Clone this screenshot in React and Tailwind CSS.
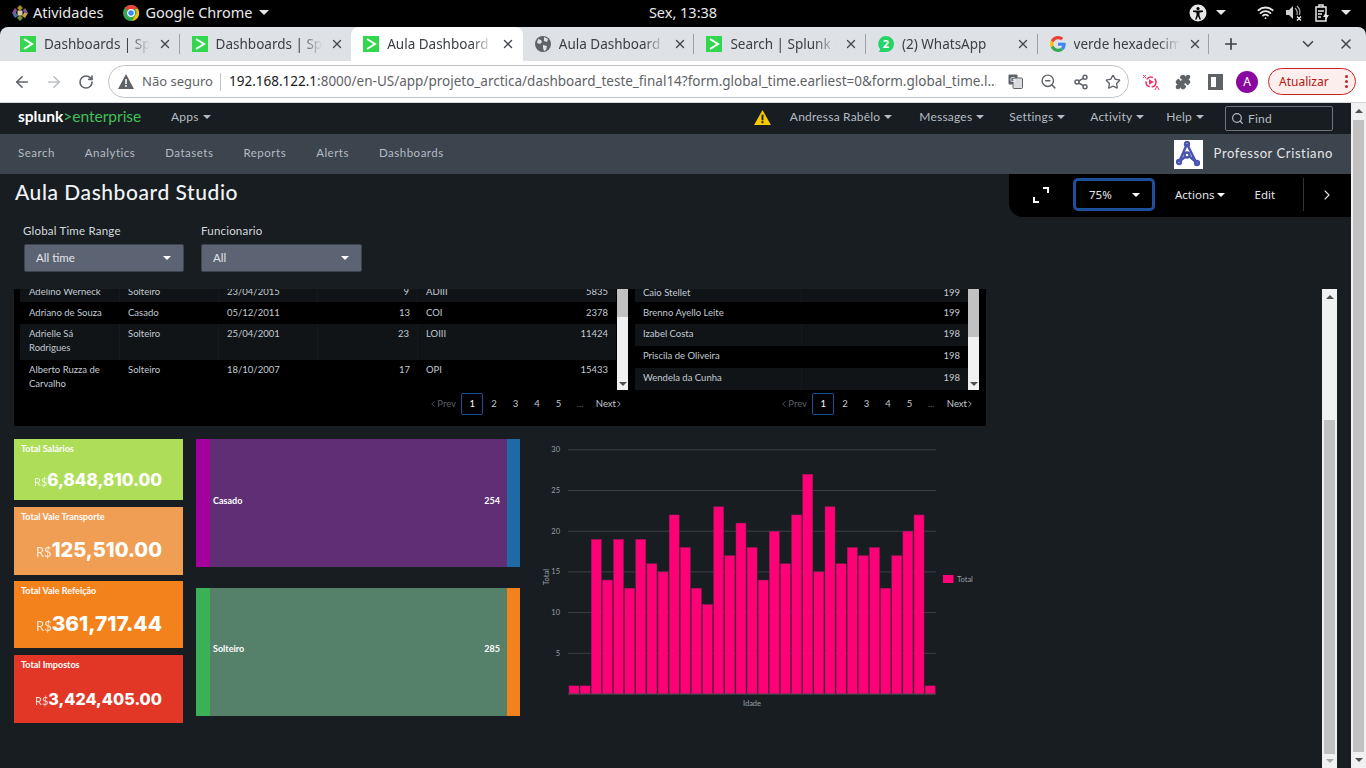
import React from "react";
import {
  ArrowLeft,
  ArrowRight,
  RotateCw,
  X,
  Plus,
  ChevronDown,
  ChevronLeft,
  ChevronRight,
  Search,
  ZoomOut,
  Share2,
  Star,
  Puzzle,
  Wifi,
} from "lucide-react";

const chromeFont = "font-['Noto_Sans',sans-serif]";
const splunkFont = "font-['Lato',sans-serif]";
const valueFont = "font-['Inter',sans-serif]";

const tabs = [
  { title: "Dashboards | Splunk", icon: "splunk", sep: true },
  { title: "Dashboards | Splunk", icon: "splunk" },
  { title: "Aula Dashboard Studio", icon: "splunk", active: true },
  { title: "Aula Dashboard Studio", icon: "globe", sep: true },
  { title: "Search | Splunk 8.2", icon: "splunk", sep: true },
  { title: "(2) WhatsApp", icon: "whatsapp", sep: true },
  { title: "verde hexadecimal", icon: "google", sep: true },
];

const employees = [
  { cells: ["Adelino Werneck", "Solteiro", "23/04/2015", "9", "ADIII", "5835"], odd: true, pad: "pt-[5px] pb-[3px]" },
  { cells: ["Adriano de Souza", "Casado", "05/12/2011", "13", "COI", "2378"], pad: "pt-[4px] pb-[4px]" },
  { cells: ["Adrielle Sá Rodrigues", "Solteiro", "25/04/2001", "23", "LOIII", "11424"], odd: true, pad: "pt-[3px] pb-[5px]" },
  { cells: ["Alberto Ruzza de Carvalho", "Solteiro", "18/10/2007", "17", "OPI", "15433"], pad: "pt-[3px] pb-[5px]" },
];

const ranking = [
  { name: "Caio Stellet", total: "199", pad: "pt-[4px]" },
  { name: "Brenno Ayello Leite", total: "199", pad: "" },
  { name: "Izabel Costa", total: "198", pad: "pb-[2px]" },
  { name: "Priscila de Oliveira", total: "198", pad: "pb-[2px]" },
  { name: "Wendela da Cunha", total: "198", pad: "pb-[2px]" },
];

const kpis = [
  { title: "Total Salários", value: "6,848,810.00", bg: "bg-[#aede58]", h: "h-[61px]", size: "text-[17px]", unit: "text-[11px]", pt: "pt-[6px]" },
  { title: "Total Vale Transporte", value: "125,510.00", bg: "bg-[#ef9e54]", h: "h-[68px]", size: "text-[20px]", unit: "text-[13px]", pt: "pt-[8px]" },
  { title: "Total Vale Refeição", value: "361,717.44", bg: "bg-[#f4821c]", h: "h-[67px]", size: "text-[20.800px]", unit: "text-[13px]", pt: "pt-[8px]" },
  { title: "Total Impostos", value: "3,424,405.00", bg: "bg-[#e23726]", h: "h-[68px]", size: "text-[16.200px]", unit: "text-[11px]", pt: "pt-[9px]" },
];

const ages = [1, 1, 19, 14, 19, 13, 19, 16, 15, 22, 18, 13, 11, 23, 17, 21, 18, 14, 20, 16, 22, 27, 15, 23, 16, 18, 17, 18, 13, 17, 20, 22, 1];

const SplunkIcon = () => (
  <span className="w-4 h-4 bg-[#32d74f] text-white flex items-center justify-center shrink-0">
    <svg width="12" height="12" viewBox="0 0 12 12" fill="none" stroke="white" strokeWidth="2">
      <path d="M2 1l8 5-8 5" />
    </svg>
  </span>
);

const GlobeIcon = () => (
  <svg width="16" height="16" viewBox="0 0 16 16" className="shrink-0">
    <circle cx="8" cy="8" r="8" fill="#5f6368" />
    <path d="M3 3l3 1 1 2-2 2-3-1zM9 1l4 2-1 3-3-1zM8 9l4 1-1 4-2 1-1-3z" fill="#dee1e6" />
  </svg>
);

const WhatsAppIcon = () => (
  <svg width="16" height="16" viewBox="0 0 16 16" className="shrink-0">
    <path d="M8 0a8 8 0 0 1 0 16H1l1.2-2.8A8 8 0 0 1 8 0z" fill="#25d366" />
    <text x="8" y="12" textAnchor="middle" fontSize="11" fontWeight="700" fill="white" fontFamily="Noto Sans, sans-serif">2</text>
  </svg>
);

const GoogleIcon = () => (
  <svg width="16" height="16" viewBox="0 0 48 48" className="shrink-0">
    <path fill="#EA4335" d="M24 9.5c3.5 0 6.700 1.200 9.200 3.600l6.900-6.900C35.900 2.400 30.400 0 24 0 14.600 0 6.500 5.400 2.600 13.200l8 6.200C12.400 13.700 17.700 9.500 24 9.500z" />
    <path fill="#4285F4" d="M47 24.500c0-1.600-.1-3.100-.4-4.500H24v9h12.900c-.6 3-2.200 5.500-4.700 7.200l7.700 6c4.500-4.200 7.100-10.300 7.100-17.700z" />
    <path fill="#FBBC05" d="M10.600 28.600c-.5-1.400-.8-3-.8-4.600s.3-3.200.8-4.600l-8-6.200C.9 16.500 0 20.100 0 24s.9 7.500 2.600 10.800l8-6.200z" />
    <path fill="#34A853" d="M24 48c6.500 0 11.900-2.100 15.900-5.800l-7.700-6c-2.200 1.400-4.900 2.300-8.200 2.300-6.300 0-11.600-4.200-13.400-9.900l-8 6.200C6.500 42.600 14.600 48 24 48z" />
  </svg>
);

const tabIcons = { splunk: SplunkIcon, globe: GlobeIcon, whatsapp: WhatsAppIcon, google: GoogleIcon };

const Caret = ({ className = "" }) => (
  <span className={`inline-block w-0 h-0 border-x-[4px] border-x-transparent border-t-[4px] border-t-current shrink-0 ${className}`} />
);

const BigCaret = ({ className = "" }) => (
  <span className={`inline-block w-0 h-0 border-x-[5px] border-x-transparent border-t-[5px] border-t-current shrink-0 ${className}`} />
);

const GnomeBar = () => (
  <div className={`h-[27px] bg-black text-[#e8e8e8] text-[14.5px] flex items-center relative pb-[2px] ${chromeFont}`}>
    <svg width="16" height="16" viewBox="0 0 16 16" className="ml-[12px]">
      <path d="M8 0l3 3-3 3-3-3z" fill="#a9862f" />
      <path d="M13 3l3 5-4 0-1-3z" fill="#7d5a9e" />
      <path d="M16 8l-3 5-3-2 2-3z" fill="#c8a54a" />
      <path d="M8 16l-3-3 3-3 3 3z" fill="#6f8f3a" />
      <path d="M3 3l2 2-1 3H0z" fill="#8e4f93" />
      <path d="M0 8h4l2 3-3 2z" fill="#4a6fa5" />
      <rect x="5.500" y="5.500" width="5" height="5" fill="#d9c9a0" />
    </svg>
    <span className="ml-[5px]">Atividades</span>
    <svg width="16" height="16" viewBox="0 0 16 16" className="ml-[20px]">
      <circle cx="8" cy="8" r="8" fill="#34a853" />
      <path d="M8 0a8 8 0 0 1 7 4H8a4 4 0 0 0-3.500 2L2.200 2.500A8 8 0 0 1 8 0z" fill="#ea4335" />
      <path d="M15 4a8 8 0 0 1-6 12l3.500-6a4 4 0 0 0-.5-6z" fill="#fbbc05" />
      <circle cx="8" cy="8" r="3.400" fill="#4285f4" stroke="white" strokeWidth="1.200" />
    </svg>
    <span className="ml-[6px]">Google Chrome</span>
    <BigCaret className="ml-[6px]" />
    <span className="absolute left-0 right-0 text-center">Sex, 13:38</span>
    <div className="ml-auto flex items-center pr-[15px] relative">
      <svg width="18" height="18" viewBox="0 0 18 18">
        <circle cx="9" cy="9" r="8.500" fill="#e8e8e8" />
        <circle cx="9" cy="4.500" r="1.600" fill="black" />
        <path d="M4 6.500h10v1.400l-3.500.6v3l1.500 4h-1.500L9 12l-1.500 3.500H6l1.500-4v-3L4 7.900z" fill="black" />
      </svg>
      <BigCaret className="ml-[9px]" />
      <Wifi size={17} strokeWidth={2.6} className="ml-[31px]" />
      <svg width="18" height="18" viewBox="0 0 18 18" className="ml-[11px]" fill="#e8e8e8">
        <path d="M1 6h3l4-4v13L4 11H1z" opacity="0.9" />
        <path d="M10 4a7 7 0 0 1 2 7M12 2a9 9 0 0 1 2.500 9" fill="none" stroke="#a0a0a0" strokeWidth="1.300" />
        <path d="M12 12.500l4 4M16 12.500l-4 4" stroke="#e8e8e8" strokeWidth="1.400" />
      </svg>
      <svg width="16" height="20" viewBox="0 0 16 20" className="ml-[11px]" fill="none" stroke="#e8e8e8" strokeWidth="1.500">
        <path d="M2 4h10v14H2zM5 2h4v2H5z" />
        <path d="M4 8h6M4 11h4M4 14h3" />
        <path d="M12 9l-3 5h3l-1 4 4-6h-3z" fill="#e8e8e8" stroke="none" />
      </svg>
      <BigCaret className="ml-[11px]" />
    </div>
  </div>
);

const Tab = ({ tab }) => {
  const Icon = tabIcons[tab.icon];
  return (
    <div className={`w-[171.600px] h-[34px] flex items-center shrink-0 ${tab.active ? "bg-white rounded-t-lg" : ""}`}>
      <span className="ml-[12px]">
        <Icon />
      </span>
      <span className="ml-[8px] w-[106px] leading-[20px] overflow-hidden whitespace-nowrap text-[13.500px] text-[#3c4043] [mask-image:linear-gradient(to_right,black_80%,transparent_100%)]">
        {tab.title}
      </span>
      <X size={14} strokeWidth={2.4} className="ml-[8px] text-[#45484c]" />
      <span className={`ml-auto h-[20px] w-px ${tab.sep ? "bg-[#9ea1a6]" : ""}`} />
    </div>
  );
};

const TabStrip = () => (
  <div className="h-[34px] bg-[#dee1e6] flex items-center pl-[8px] rounded-t-lg">
    {tabs.map((tab, i) => (
      <Tab key={i} tab={tab} />
    ))}
    <Plus size={18} strokeWidth={2.2} className="ml-[13px] text-[#3c4043]" />
    <ChevronDown size={18} strokeWidth={2.2} className="ml-[59px] text-[#45484c]" />
    <X size={16} strokeWidth={2.4} className="ml-[21px] text-[#45484c]" />
  </div>
);

const Toolbar = () => (
  <div className={`h-[42px] bg-white flex items-center border-b border-[#d5d7da] ${chromeFont}`}>
    <ArrowLeft size={18} strokeWidth={2.2} className="ml-[13px] text-[#5f6368]" />
    <ArrowRight size={18} strokeWidth={2.2} className="ml-[14px] text-[#bdc1c6]" />
    <RotateCw size={16} strokeWidth={2.4} className="ml-[15px] text-[#5f6368]" />
    <div className="ml-[14px] w-[1021px] h-[33px] rounded-full border border-[#bfc2c6] flex items-center whitespace-nowrap">
      <svg width="16" height="15" viewBox="0 0 16 15" className="ml-[9px] shrink-0">
        <path d="M8 0l8 15H0z" fill="#5f6368" />
        <rect x="7.200" y="5" width="1.600" height="5" fill="white" />
        <rect x="7.200" y="11" width="1.600" height="1.800" fill="white" />
      </svg>
      <span className="ml-[8px] text-[#5f6368] text-[13px]">Não seguro</span>
      <span className="ml-[7px] w-px h-[18px] bg-[#bfc2c6]" />
      <span className="ml-[8px] text-[#202124] w-[767px] overflow-hidden text-[13.500px]">
        192.168.122.1
        <span className="text-[#5f6368]">:8000/en-US/app/projeto_arctica/dashboard_teste_final14?form.global_time.earliest=0&form.global_time.l...</span>
      </span>
      <svg width="15" height="15" viewBox="0 0 15 15" className="ml-[12px] shrink-0">
        <rect x="0.500" y="0.500" width="9" height="10" rx="1" fill="#5f6368" />
        <rect x="5" y="4" width="9.500" height="10.500" rx="1" fill="#dadce0" stroke="#5f6368" />
        <text x="2" y="8" fontSize="7" fill="white" fontFamily="Noto Sans, sans-serif">G</text>
      </svg>
      <ZoomOut size={17} strokeWidth={2} className="ml-[17px] text-[#5f6368]" />
      <Share2 size={16} strokeWidth={2.2} className="ml-[16px] text-[#5f6368]" />
      <Star size={16} strokeWidth={2} className="ml-[16px] text-[#5f6368]" />
    </div>
    <svg width="18" height="18" viewBox="0 0 18 18" className="ml-[13px]" fill="none">
      <circle cx="9" cy="9" r="5" stroke="#f0386b" strokeWidth="1.600" strokeDasharray="7 2" />
      <path d="M7 6.200l5 2.800-5 2.800z" fill="#f0386b" />
      <path d="M1 2l3 3M4 2L1 5" stroke="#f0386b" strokeWidth="1" />
      <path d="M13 17l2-4 2 4" stroke="#f0386b" strokeWidth="1" />
    </svg>
    <Puzzle size={16} strokeWidth={2} fill="#5f6368" className="ml-[15px] text-[#5f6368]" />
    <span className="ml-[17px] w-[15px] h-[16px] border-[3px] border-[#5f6368] border-r-[7px] box-border" />
    <span className="ml-[13px] w-[22px] h-[22px] rounded-full bg-[#8a0aa0] text-white text-[12px] flex items-center justify-center">A</span>
    <div className="ml-[10px] w-[88px] h-[27px] rounded-full border border-[#c5221f] bg-[#fbeeed] text-[#b3160f] text-[12px] flex items-center pl-[10px]">
      <span className="pt-[1px]">Atualizar</span>
      <span className="ml-[16px] flex flex-col gap-[2px]">
        <span className="w-[3px] h-[3px] rounded-full bg-[#c5221f]" />
        <span className="w-[3px] h-[3px] rounded-full bg-[#c5221f]" />
        <span className="w-[3px] h-[3px] rounded-full bg-[#c5221f]" />
      </span>
    </div>
  </div>
);

const MenuItem = ({ label, className = "" }) => (
  <span className={`flex items-center gap-[4px] whitespace-nowrap ${className}`}>
    {label}
    <Caret />
  </span>
);

const SplunkBar = () => (
  <div className={`h-[31px] bg-[#171d21] text-[#b5bcc4] text-[12px] flex items-center tracking-[0.2px] pb-[3px] ${splunkFont}`}>
    <span className="ml-[18px] w-[153px] text-[15.500px] font-bold text-white tracking-normal">
      splunk<span className="text-[#40c057] font-normal">&gt;enterprise</span>
    </span>
    <MenuItem label="Apps" />
    <svg width="17" height="15" viewBox="0 0 18 16" className="ml-auto">
      <path d="M9 0l9 16H0z" fill="#f8c800" />
      <rect x="8" y="5" width="2" height="6" fill="#171d21" />
      <rect x="8" y="12" width="2" height="2" fill="#171d21" />
    </svg>
    <MenuItem label="Andressa Rabêlo" className="ml-[19px]" />
    <MenuItem label="Messages" className="ml-[27px]" />
    <MenuItem label="Settings" className="ml-[25px]" />
    <MenuItem label="Activity" className="ml-[25px]" />
    <MenuItem label="Help" className="ml-[22px]" />
    <div className="ml-[21px] w-[108px] h-[25px] mt-[3px] border border-[#6b737c] rounded-[2px] flex items-center pl-[5px] gap-[4px] text-[12px] mr-[18px]">
      <Search size={13} strokeWidth={2.2} />
      Find
    </div>
  </div>
);

const AppNav = () => (
  <div className={`h-[40px] bg-[#3c444d] text-[#b5bcc4] text-[11.500px] flex items-center gap-[30px] pl-[18px] tracking-[0.5px] ${splunkFont}`}>
    <span className="pb-[2px]">Search</span>
    <span className="pb-[2px]">Analytics</span>
    <span className="pb-[2px]">Datasets</span>
    <span className="pb-[2px]">Reports</span>
    <span className="pb-[2px]">Alerts</span>
    <span className="pb-[2px]">Dashboards</span>
    <div className="ml-auto flex items-center pr-[18px]">
      <div className="w-[29px] h-[29px] bg-white flex items-center justify-center">
        <svg width="24" height="26" viewBox="0 0 24 26" fill="none" stroke="#4a55b0" strokeWidth="2.400">
          <path d="M11 3L3 21M11 3l10 20M4 20l5-4M13 15l8 7" />
          <circle cx="11" cy="3" r="2" />
          <circle cx="3" cy="21" r="2" />
          <circle cx="21" cy="22" r="2" />
          <circle cx="11" cy="14" r="2.500" />
        </svg>
      </div>
      <span className="ml-[11px] text-[13px] text-[#e3e6ea] tracking-[0.6px] pb-[1px]">Professor Cristiano</span>
    </div>
  </div>
);

const DashToolbar = () => (
  <div className="absolute top-0 right-0 w-[342px] h-[43px] bg-black rounded-bl-[14px] flex items-center pb-[2px] text-[#e3e6ea] text-[11.500px] z-10">
    <svg width="16" height="16" viewBox="0 0 16 16" fill="none" stroke="white" strokeWidth="2" className="ml-[24px]">
      <path d="M10 1h5v5M6 15H1v-5" />
    </svg>
    <div className="ml-[24px] w-[82px] h-[33px] border-[3px] border-[#1e4f9c] rounded-[5px] flex items-center pl-[13px]">
      75%
      <Caret className="ml-[20px] text-white" />
    </div>
    <span className="ml-[20px] flex items-center gap-[2px]">
      Actions
      <Caret className="text-white" />
    </span>
    <span className="ml-[30px]">Edit</span>
    <span className="ml-[28px] w-px h-[33px] bg-[#333]" />
    <ChevronRight size={16} strokeWidth={1.6} className="ml-[15px]" />
  </div>
);

const Filter = ({ label, value, labelClass = "", width = "w-[160px]", className = "" }) => (
  <div className={className}>
    <div className={`text-[11.500px] text-[#d5d9dd] h-[17px] tracking-[0.2px] ${labelClass}`}>{label}</div>
    <div className={`mt-[5px] h-[28px] rounded-[2px] bg-[#5c6373] border border-[#3c444d] text-[#e3e6ea] text-[11.500px] flex items-center justify-between pl-[11px] pr-[12px] ${width}`}>
      {value}
      <Caret className="text-white" />
    </div>
  </div>
);

const ScrollBar = ({ width, top, thumb, arrowUp = true, arrowDown = "text-[#505050]", bottom = "h-[12px]", className = "" }) => (
  <div className={`bg-[#f1f1f1] flex flex-col shrink-0 ${width} ${className}`}>
    {arrowUp && (
      <span className="h-[15px] flex items-center justify-center text-[#505050] shrink-0">
        <span className="w-0 h-0 border-x-[4px] border-x-transparent border-b-[4px] border-b-current" />
      </span>
    )}
    <div className={`shrink-0 ${top}`} />
    <div className={`bg-[#c1c1c1] ${thumb}`} />
    <span className={`mt-auto flex items-center justify-center shrink-0 ${bottom} ${arrowDown}`}>
      <Caret />
    </span>
  </div>
);

const Pagination = () => (
  <div className="h-[28px] flex items-center justify-end pr-[6px] text-[#c3cbd4] text-[9.500px]">
    <span className="flex items-center text-[#5a6068] w-[31px] -ml-[1px]">
      <ChevronLeft size={10} className="-mx-[2px]" />
      <span className="ml-[1px]">Prev</span>
    </span>
    <span className="w-[22px] h-[22px] border border-[#1e4f9c] rounded-[2px] flex items-center justify-center text-white">1</span>
    {["2", "3", "4", "5"].map((n) => (
      <span key={n} className="w-[21.500px] text-center">
        {n}
      </span>
    ))}
    <span className="w-[21.500px] text-center text-[#5a6068]">...</span>
    <span className="ml-[5px] flex items-center">
      Next
      <ChevronRight size={10} className="-mx-[2px]" />
    </span>
  </div>
);

const TablesPanel = () => (
  <div className={`ml-[14px] w-[972px] bg-black flex pl-[6px] pr-[7px] pb-[8px] text-[#c3cbd4] text-[9.500px] leading-[14px] ${splunkFont}`}>
    <div className="w-[608px]">
      <div className="h-[101px] flex overflow-hidden">
        <div className="w-[596px] -mt-[9px] shrink-0">
          {employees.map((row, i) => (
            <div key={i} className={`grid grid-cols-[100px_99px_99px_100px_99px_99px] ${row.odd ? "bg-[#101417]" : ""}`}>
              {row.cells.map((cell, j) => (
                <div
                  key={j}
                  className={`${row.pad} ${j === 0 ? "pl-[9px] pr-[8px]" : "px-[8px]"} ${j === 3 || j === 5 ? "text-right" : ""} ${row.odd && j < 4 ? "border-r border-[#161a1e]" : ""}`}
                >
                  {cell}
                </div>
              ))}
            </div>
          ))}
        </div>
        <ScrollBar width="w-[11px]" top="h-0" thumb="h-[28px] shrink-0" arrowUp={false} className="ml-[1px]" />
      </div>
      <Pagination />
    </div>
    <div className="ml-[7px] w-[344px]">
      <div className="h-[101px] flex overflow-hidden">
        <div className="w-[333px] -mt-[9px] shrink-0">
          {ranking.map((row, i) => (
            <div key={i} className={`h-[22px] grid grid-cols-[167px_166px] ${i % 2 === 0 ? "bg-[#101417]" : ""}`}>
              <div className={`flex items-center pl-[8px] ${row.pad} ${i % 2 === 0 ? "border-r border-[#161a1e]" : ""}`}>{row.name}</div>
              <div className={`flex items-center justify-end pr-[8px] ${row.pad}`}>{row.total}</div>
            </div>
          ))}
        </div>
        <ScrollBar width="w-[11px]" top="h-0" thumb="h-[48px] shrink-0" arrowUp={false} />
      </div>
      <Pagination />
    </div>
  </div>
);

const KpiCard = ({ kpi }) => (
  <div className={`${kpi.bg} ${kpi.h} text-white pl-[7px] pr-[21px] pt-[4px] ${splunkFont}`}>
    <div className="text-[9px] font-bold leading-[12px]">{kpi.title}</div>
    <div className={`text-right whitespace-nowrap leading-[28px] ${kpi.pt} mt-[5px]`}>
      <span className={`${kpi.unit} font-normal opacity-80`}>R$</span>
      <span className={`${kpi.size} font-extrabold ${valueFont}`}>{kpi.value}</span>
    </div>
  </div>
);

const SankeyBar = ({ label, value, left, mid, right, pad, className = "" }) => (
  <div className={`flex h-[128px] text-white text-[9px] font-bold ${className} ${splunkFont}`}>
    <div className={`w-[14px] ${left}`} />
    <div className={`flex-1 ${mid} flex items-center justify-between pl-[3px] pr-[7px] ${pad}`}>
      <span>{label}</span>
      <span>{value}</span>
    </div>
    <div className={`w-[13px] ${right}`} />
  </div>
);

const AgeChart = () => (
  <svg width="440" height="285" viewBox="540 439 440 285" className="ml-[20px] shrink-0" fontFamily="Lato, sans-serif">
    {[30, 25, 20, 15, 10, 5].map((v) => {
      const y = 694 - v * 8.14;
      return (
        <g key={v}>
          <line x1="568" x2="936" y1={y} y2={y} stroke="#3b4045" />
          <text x="560" y={y + 2.5} textAnchor="end" fontSize="7.5" fill="#9aa0a6">{v}</text>
        </g>
      );
    })}
    {ages.map((v, i) => (
      <rect key={i} x={569 + i * 11.13} y={694 - v * 8.14} width="10" height={v * 8.14} fill="#ff0077" stroke="#8f1a57" strokeWidth="0.5" />
    ))}
    <line x1="568" x2="936" y1="694" y2="694" stroke="#4a4f55" />
    <text x="752" y="706" textAnchor="middle" fontSize="7.5" fill="#9aa0a6">Idade</text>
    <text transform="translate(549 577) rotate(-90)" textAnchor="middle" fontSize="7.5" fill="#9aa0a6">Total</text>
    <rect x="943" y="575" width="10.5" height="8" fill="#ff0077" />
    <text x="957" y="582" fontSize="7.5" fill="#9aa0a6">Total</text>
  </svg>
);

const Dashboard = () => (
  <div className="flex-1 relative flex bg-[#171d21] overflow-hidden min-h-0">
    <DashToolbar />
    <div className="flex-1 flex flex-col min-w-0">
      <h1 className={`h-[38px] pl-[15px] pt-[2px] text-[21px] font-medium text-[#f2f4f5] tracking-[0.55px] leading-[32px] ${splunkFont}`}>
        Aula Dashboard Studio
      </h1>
      <div className={`h-[77px] flex pl-[24px] pt-[10px] ${splunkFont}`}>
        <Filter label="Global Time Range" value="All time" labelClass="-ml-[1px]" />
        <Filter label="Funcionario" value="All" width="w-[161px]" className="ml-[17px]" />
      </div>
      <div className="flex-1 flex min-h-0">
        <div className="w-[1322px] shrink-0">
          <TablesPanel />
          <div className="mt-[13px] ml-[14px] flex">
            <div className="w-[169px] flex flex-col gap-[6.500px] shrink-0">
              {kpis.map((kpi) => (
                <KpiCard key={kpi.title} kpi={kpi} />
              ))}
            </div>
            <div className="ml-[13px] w-[324px] shrink-0">
              <SankeyBar label="Casado" value="254" left="bg-[#a3009e]" mid="bg-[#5f2e75]" right="bg-[#1f6aa5]" pad="pb-[5px]" />
              <SankeyBar label="Solteiro" value="285" left="bg-[#3bb054]" mid="bg-[#55806a]" right="bg-[#f4821c]" pad="pb-[6px]" className="mt-[21px]" />
            </div>
            <AgeChart />
          </div>
        </div>
        <ScrollBar width="w-[15px]" top="h-[116px]" thumb="h-[334px] mx-[2px] shrink-0" arrowDown="text-[#a8a8a8]" bottom="h-[14px]" />
        <div className="w-[14px]" />
      </div>
    </div>
  </div>
);

export default function App() {
  return (
    <div className="w-[1366px] h-[768px] overflow-hidden flex flex-col bg-black">
      <div className={chromeFont}>
        <GnomeBar />
        <TabStrip />
        <Toolbar />
      </div>
      <div className="flex-1 flex min-h-0">
        <div className="flex-1 flex flex-col min-w-0">
          <SplunkBar />
          <AppNav />
          <Dashboard />
        </div>
        <ScrollBar width="w-[15px]" top="h-[2px]" thumb="flex-1 mx-[2px]" bottom="h-[16px]" />
      </div>
    </div>
  );
}
